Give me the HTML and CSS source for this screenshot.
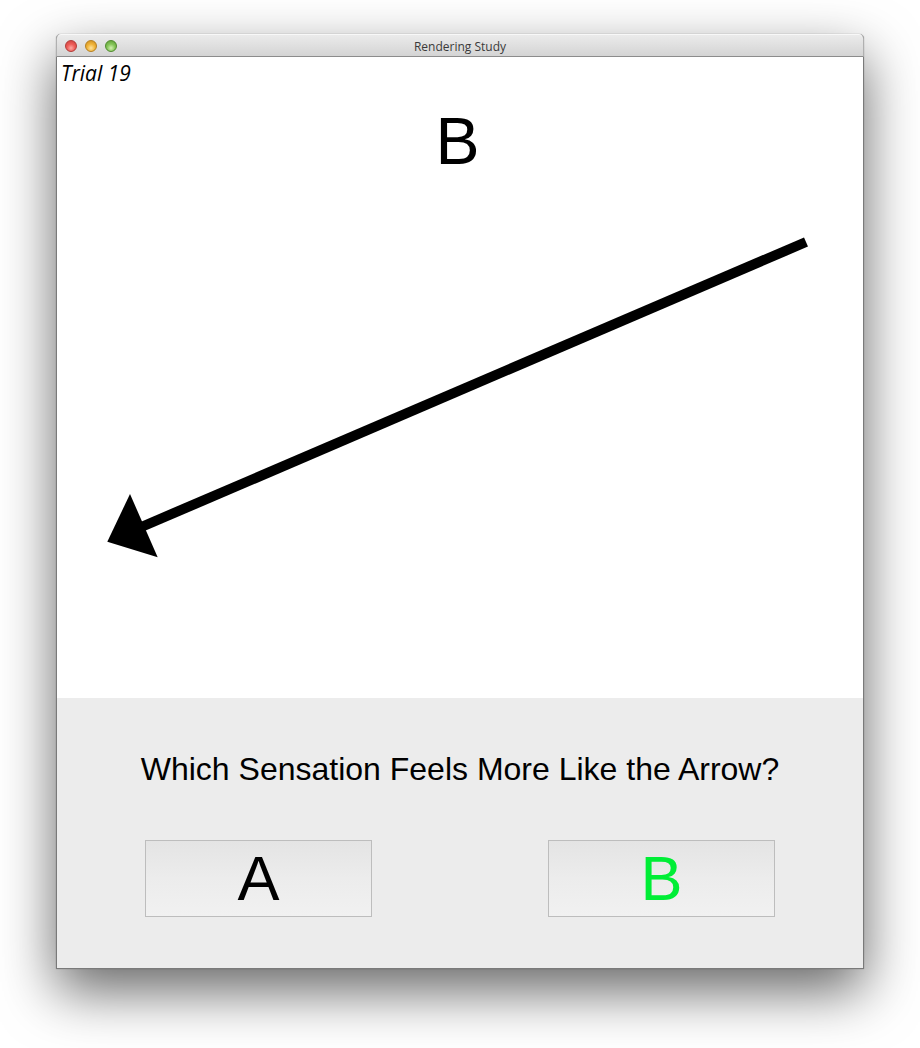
FILE: index.html
```html
<!DOCTYPE html>
<html>
<head>
<meta charset="utf-8">
<link rel="stylesheet" href="styles.css">
</head>
<body>
<div class="window">
  <div class="titlebar">
    <div class="lights">
      <span class="light red"></span>
      <span class="light yellow"></span>
      <span class="light green"></span>
    </div>
    <div class="title">Rendering Study</div>
  </div>
  <div class="canvas">
    <svg class="arrow" width="806" height="641" viewBox="0 0 806 641">
      <line x1="749" y1="185" x2="82" y2="471" stroke="#000" stroke-width="10"/>
      <polygon points="50.3,484.7 73,437 100.7,500.3" fill="#000"/>
    </svg>
    <div class="trial">Trial 19</div>
    <div class="big">B</div>
  </div>
  <div class="panel">
    <div class="question">Which Sensation Feels More Like the Arrow?</div>
    <div class="choices">
      <button class="choice">A</button>
      <button class="choice chosen">B</button>
    </div>
  </div>
</div>
</body>
</html>
```

FILE: styles.css
```css
html, body {
  margin: 0;
  padding: 0;
  background: #ffffff;
}
body {
  padding: 34px 0 0 56px;
  width: 920px;
  height: 1048px;
  box-sizing: border-box;
  overflow: hidden;
}
.window {
  width: 808px;
  height: 935px;
  box-sizing: border-box;
  border: 1px solid #7a7a7a;
  border-top: none;
  border-radius: 5px 5px 0 0;
  display: flex;
  flex-direction: column;
  box-shadow: 0 22px 55px rgba(0, 0, 0, 0.6), 0 0 1px rgba(0,0,0,0.5);
  background: #ececec;
}
.titlebar {
  height: 22px;
  border-bottom: 1px solid #8c8c8c;
  background: linear-gradient(#ececec, #d4d4d4);
  border-radius: 5px 5px 0 0;
  box-shadow: inset 0 1px 0 #f8f8f8;
  display: flex;
  align-items: center;
  position: relative;
  margin: 0 -1px;
  border-left: 1px solid #b0b0b0;
  border-right: 1px solid #b0b0b0;
}
.lights {
  display: flex;
  gap: 8px;
  padding-left: 8px;
  padding-top: 2px;
}
.light {
  width: 12px;
  height: 12px;
  border-radius: 50%;
  box-sizing: border-box;
}
.red {
  background: radial-gradient(circle at 50% 70%, #fcaaa3 0, #ee5d58 45%, #c8403c 100%);
  border: 1px solid #b23a36;
}
.yellow {
  background: radial-gradient(circle at 50% 70%, #fde3a0 0, #f1b53a 45%, #c98b1e 100%);
  border: 1px solid #b67f1e;
}
.green {
  background: radial-gradient(circle at 50% 70%, #d4f0b3 0, #86c65a 45%, #5a9a33 100%);
  border: 1px solid #4f8a2c;
}
.title {
  position: absolute;
  left: 0;
  right: 0;
  top: 2px;
  line-height: 22px;
  text-align: center;
  font-family: "Open Sans", "DejaVu Sans", sans-serif;
  font-size: 12px;
  color: #3a3a3a;
  pointer-events: none;
}
.canvas {
  position: relative;
  height: 641px;
  background: #ffffff;
}
.arrow {
  position: absolute;
  left: 0;
  top: 0;
}
.trial {
  padding: 4px 0 0 4px;
  font-family: "Open Sans", sans-serif;
  font-style: italic;
  font-size: 21px;
  line-height: 24px;
  color: #000;
}
.big {
  margin-top: 23px;
  text-align: center;
  font-family: "Liberation Sans", Arial, sans-serif;
  font-size: 66px;
  line-height: 67px;
  color: #000;
  padding-right: 5px;
}
.panel {
  flex: 1;
  background: #ececec;
  display: flex;
  flex-direction: column;
}
.question {
  padding-top: 53px;
  text-align: center;
  font-family: "Liberation Sans", Arial, sans-serif;
  font-size: 32px;
  line-height: 36px;
  color: #000;
}
.choices {
  margin-top: 53px;
  padding: 0 88px;
  display: flex;
  justify-content: space-between;
}
.choice {
  width: 227px;
  height: 77px;
  box-sizing: border-box;
  border: 1px solid #bdbdbd;
  background: linear-gradient(#e4e4e4, #ececec 50%, #f1f1f1);
  font-family: "Liberation Sans", Arial, sans-serif;
  font-size: 63px;
  line-height: 1;
  color: #000;
  padding: 0;
  margin: 0;
}
.chosen {
  color: #00ee36;
}
```
